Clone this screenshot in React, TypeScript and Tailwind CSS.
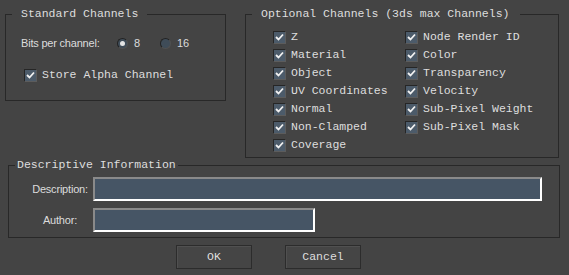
import { ReactNode } from "react";

const mono = "font-['Liberation_Mono',monospace] text-[11.5px] text-[#dedede]";
const sans = "font-['Liberation_Sans',Arial,sans-serif] text-[11px] tracking-[-0.2px] text-[#dcdcdc]";

function Check({ label }: { label: string }) {
  return (
    <div className="flex h-[18px] items-center">
      <span className="flex h-[13px] w-[13px] items-center justify-center border border-t-[#262626] border-l-[#262626] border-b-[#5c5c5c] border-r-[#5c5c5c] bg-[#4c5b6a]">
        <svg width="9" height="8" viewBox="0 0 9 8">
          <path d="M1 4 L3.5 6.5 L8 1.5" stroke="#f2f2f2" strokeWidth="1.8" fill="none" />
        </svg>
      </span>
      <span className={`ml-[5px] leading-[14px] whitespace-nowrap ${mono}`}>{label}</span>
    </div>
  );
}

function Radio({ label, checked }: { label: string; checked?: boolean }) {
  return (
    <div className="flex items-center">
      <span className="flex h-[11px] w-[11px] items-center justify-center rounded-full border border-t-[#222] border-l-[#222] border-b-[#505050] border-r-[#505050] bg-[#3f4c58]">
        {checked && <span className="h-[5px] w-[5px] rounded-full bg-[#e4e4e4]" />}
      </span>
      <span className={`ml-[6px] leading-[14px] ${sans}`}>{label}</span>
    </div>
  );
}

function Group({
  title,
  pad = "px-[9px]",
  className,
  children,
}: {
  title: string;
  pad?: string;
  className: string;
  children: ReactNode;
}) {
  return (
    <fieldset className={`border border-[#282828] p-0 ${className}`}>
      <legend className={`ml-[6px] ${pad} leading-[14px] whitespace-nowrap ${mono}`}>{title}</legend>
      {children}
    </fieldset>
  );
}

function Field({ width }: { width: string }) {
  return (
    <div
      className={`h-[24px] ${width} border-2 border-t-[#8a8a8a] border-l-[#8a8a8a] border-b-white border-r-white bg-[#465565]`}
    />
  );
}

function Button({ label }: { label: string }) {
  return (
    <button
      className={`block h-[24px] w-[76px] border border-[#2c2c2c] bg-[#454545] leading-[14px] shadow-[inset_1px_1px_0_#505050] ${mono}`}
    >
      {label}
    </button>
  );
}

export default function App() {
  const left = ["Z", "Material", "Object", "UV Coordinates", "Normal", "Non-Clamped", "Coverage"];
  const right = ["Node Render ID", "Color", "Transparency", "Velocity", "Sub-Pixel Weight", "Sub-Pixel Mask"];

  return (
    <div className="flex h-[275px] w-[569px] flex-col bg-[#444444] pt-[7px]">
      <div className="flex items-start pl-[5px]">
        <Group title="Standard Channels" className="h-[94px] w-[221px]">
          <div className="pl-[15px] pt-[15px]">
            <div className="flex h-[14px] items-center">
              <span className={`w-[96px] leading-[14px] ${sans}`}>Bits per channel:</span>
              <div className="w-[43px]">
                <Radio label="8" checked />
              </div>
              <Radio label="16" />
            </div>
            <div className="ml-[3px] mt-[16px]">
              <Check label="Store Alpha Channel" />
            </div>
          </div>
        </Group>
        <Group
          title="Optional Channels (3ds max Channels)"
          pad="pl-[9px] pr-[11px]"
          className="ml-[19px] h-[151px] w-[314px]"
        >
          <div className="flex pl-[27px] pt-[7px]">
            <div className="flex w-[132px] flex-col">
              {left.map((l) => (
                <Check key={l} label={l} />
              ))}
            </div>
            <div className="flex flex-col">
              {right.map((l) => (
                <Check key={l} label={l} />
              ))}
            </div>
          </div>
        </Group>
      </div>

      <Group title="Descriptive Information" pad="px-[2px]" className="ml-[8px] h-[80px] w-[552px]">
        <div className="pl-[19px] pt-[5px]">
          <div className="flex items-center">
            <span className={`w-[64px] text-center leading-[14px] ${sans}`}>Description:</span>
            <div className="ml-[1px]">
              <Field width="w-[449px]" />
            </div>
          </div>
          <div className="mt-[7px] flex items-center">
            <span className={`w-[64px] text-center leading-[14px] ${sans}`}>Author:</span>
            <div className="ml-[1px]">
              <Field width="w-[222px]" />
            </div>
          </div>
        </div>
      </Group>

      <div className="mt-[7px] flex pl-[176px]">
        <Button label="OK" />
        <div className="ml-[33px]">
          <Button label="Cancel" />
        </div>
      </div>
    </div>
  );
}
